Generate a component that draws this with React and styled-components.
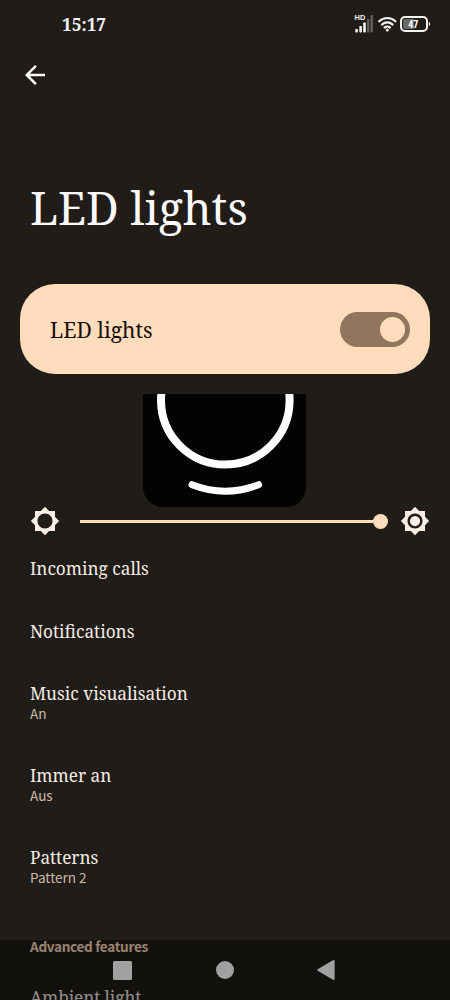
import React from "react";
import styled, { createGlobalStyle } from "styled-components";

const serif = `"Noto Serif", "DejaVu Serif Condensed", "DejaVu Serif", serif`;
const sans = `"Noto Sans CJK SC", "Noto Sans", sans-serif`;

const GlobalStyle = createGlobalStyle`
  * { box-sizing: border-box; }
  body { margin: 0; background: #201d18; }
  svg { display: block; flex: none; }
`;

const Screen = styled.div`
  position: relative;
  display: flex;
  flex-direction: column;
  width: 450px;
  height: 1000px;
  overflow: hidden;
  background: #201d18;
  color: #f6ece4;
  font-family: ${serif};
  font-stretch: condensed;

  > * { flex-shrink: 0; }
`;

const StatusBar = styled.header`
  display: flex;
  align-items: center;
  justify-content: space-between;
  height: 50px;
  padding: 0 18px 0 62px;
`;

const Clock = styled.time`
  font-size: 17.2px;
  font-weight: 700;
  line-height: 24px;
  color: #f4f4f4;
`;

const StatusIcons = styled.div`
  display: flex;
  height: 50px;
`;

const Toolbar = styled.nav`
  display: flex;
  align-items: center;
  height: 50px;
  padding-left: 20px;
`;

const Title = styled.h1`
  margin: 78px 0 0;
  padding-left: 30px;
  font-size: 45px;
  font-weight: 400;
  line-height: 60px;
  white-space: nowrap;
  color: #fdf8fb;
`;

const SwitchCard = styled.section`
  display: flex;
  align-items: center;
  justify-content: space-between;
  height: 90px;
  margin: 46px 20px 0;
  padding: 0 20px 0 30px;
  border-radius: 35px;
  background: #ffdcbc;
  color: #15100b;
`;

const CardLabel = styled.span`
  padding-top: 2px;
  font-size: 21.2px;
  line-height: 30px;
`;

const Switch = styled.div`
  display: flex;
  align-items: center;
  justify-content: flex-end;
  width: 70px;
  height: 35px;
  padding-right: 5px;
  border-radius: 18px;
  background: #8f765c;
`;

const Knob = styled.div`
  width: 25px;
  height: 25px;
  border-radius: 50%;
  background: #ffdcbc;
`;

const Preview = styled.div`
  width: 163px;
  height: 112.5px;
  margin: 20px 0 0 143px;
  overflow: hidden;
  border-radius: 0 0 20px 20px;
  background: #030303;
`;

const Brightness = styled.div`
  display: flex;
  align-items: center;
  height: 30px;
  margin: -0.5px 0 0.5px;
  padding: 0 20px 0 30px;
`;

const Track = styled.div`
  display: flex;
  align-items: center;
  justify-content: flex-end;
  width: 307.5px;
  height: 15px;
  margin: 0 12.5px 0 20px;
`;

const TrackLine = styled.div`
  flex: 1;
  height: 3px;
  background: #ffdcbc;
`;

const Thumb = styled.div`
  width: 15px;
  height: 15px;
  border-radius: 50%;
  background: #ffdcbc;
`;

const List = styled.main`
  display: flex;
  flex-direction: column;
  padding-top: 1.25px;
`;

const Row = styled.div`
  padding: 20.25px 30px;
`;

const RowTitle = styled.div`
  font-size: 17.2px;
  line-height: 22px;
  letter-spacing: ${(p) => p.$track || "normal"};
  white-space: nowrap;
`;

const RowValue = styled.div`
  margin: -1px 0 1px;
  font-family: ${sans};
  font-size: 13.55px;
  line-height: 19.25px;
  color: #cdb9a9;
`;

const SectionLabel = styled.h2`
  margin: 27.75px 30px 31.5px;
  font-family: ${sans};
  font-size: 13.55px;
  font-weight: 700;
  line-height: 20px;
  letter-spacing: -0.3px;
  color: #ffdcbc;
`;

const LastTitle = styled(RowTitle)`
  padding-left: 30px;
`;

const SystemNav = styled.footer`
  position: absolute;
  inset: auto 0 0;
  display: flex;
  align-items: center;
  justify-content: space-between;
  height: 60px;
  padding: 0 114px 0 112px;
  background: rgba(0, 0, 0, 0.4);
`;

const gear =
  "M20 15.31L23.31 12 20 8.69V4h-4.69L12 .69 8.69 4H4v4.69L.69 12 4 15.31V20h4.69L12 23.31 15.31 20H20v-4.69zM12 18c-3.31 0-6-2.69-6-6s2.69-6 6-6 6 2.69 6 6-2.69 6-6 6z";

const Sun = ({ filled }) => (
  <svg width="30" height="30" viewBox="0 0 24 24" fill="#fbeee6">
    <path d={gear} />
    {filled && <circle cx="12" cy="12" r="4.1" />}
  </svg>
);

const items = [
  { title: "Incoming calls" },
  { title: "Notifications" },
  { title: "Music visualisation", value: "An" },
  { title: "Immer an", value: "Aus" },
  { title: "Patterns", value: "Pattern 2" },
];

export default function App() {
  return (
    <>
      <GlobalStyle />
      <Screen>
        <StatusBar>
          <Clock>15:17</Clock>
          <StatusIcons>
            <svg width="78" height="50" viewBox="354 0 78 50">
              <text x="354.6" y="20.2" fontFamily="Liberation Sans" fontWeight="700" fontSize="7.4" fill="#f4f4f4">HD</text>
              <g fill="#f4f4f4">
                <rect x="355.3" y="29" width="2.6" height="3.6" rx=".8" />
                <rect x="359.3" y="26" width="2.6" height="6.6" rx=".8" />
                <rect x="363.2" y="22.5" width="2.6" height="10.1" rx=".8" />
              </g>
              <g fill="#64615d">
                <rect x="367" y="19" width="2.4" height="13.6" rx=".8" />
                <rect x="370.5" y="15" width="2.4" height="17.6" rx=".8" />
              </g>
              <g fill="none" stroke="#f4f4f4" strokeWidth="2.2" strokeLinecap="round">
                <path d="M379.2 21.3a11.6 11.6 0 0 1 16.2 0" />
                <path d="M382 24.6a7.6 7.6 0 0 1 10.6 0" />
                <path d="M384.6 27.6a3.9 3.9 0 0 1 5.4 0" />
              </g>
              <circle cx="387.3" cy="29.9" r="1.5" fill="#f4f4f4" />
              <rect x="401" y="17" width="26" height="14" rx="4" fill="none" stroke="#f4f4f4" strokeWidth="2" />
              <path d="M405 19h9v10h-9a2 2 0 0 1-2-2v-6a2 2 0 0 1 2-2z" fill="#6b6966" />
              <path d="M428.8 21.7q1.3.5 1.3 2.3t-1.3 2.3z" fill="#f4f4f4" />
              <text x="413.2" y="27.6" textAnchor="middle" fontFamily="Roboto" fontWeight="700" fontSize="10" fill="#fff">47</text>
            </svg>
          </StatusIcons>
        </StatusBar>
        <Toolbar>
          <svg width="30" height="30" viewBox="0 0 24 24" fill="#fff">
            <path d="M20 11H7.83l5.59-5.59L12 4l-8 8 8 8 1.41-1.41L7.83 13H20v-2z" />
          </svg>
        </Toolbar>
        <Title>LED lights</Title>
        <SwitchCard>
          <CardLabel>LED lights</CardLabel>
          <Switch>
            <Knob />
          </Switch>
        </SwitchCard>
        <Preview>
          <svg width="164" height="113" viewBox="143 394 164 113" fill="none" stroke="#fff" strokeLinecap="round">
            <circle cx="225.3" cy="400.3" r="64.3" strokeWidth="8" />
            <path d="M192 484.7a92.2 92.2 0 0 0 66.6 0" strokeWidth="7" />
          </svg>
        </Preview>
        <Brightness>
          <Sun />
          <Track>
            <TrackLine />
            <Thumb />
          </Track>
          <Sun filled />
        </Brightness>
        <List>
          {items.map((item) => (
            <Row key={item.title}>
              <RowTitle>{item.title}</RowTitle>
              {item.value && <RowValue>{item.value}</RowValue>}
            </Row>
          ))}
          <SectionLabel>Advanced features</SectionLabel>
          <LastTitle $track="-0.08px">Ambient light</LastTitle>
        </List>
        <SystemNav>
          <svg width="21" height="21" viewBox="0 0 21 21" fill="#a3a0a1">
            <rect x="1" y="1" width="19" height="19" rx="1.5" />
          </svg>
          <svg width="20" height="20" viewBox="0 0 20 20" fill="#a3a0a1">
            <circle cx="10" cy="10" r="9" />
          </svg>
          <svg width="19" height="22" viewBox="0 0 19 22" fill="#a3a0a1">
            <path d="M0.700 10.200L16 1.200Q17.600 .5 17.600 2v18q0 1.500-1.600.8L.7 11.800q-1-.8 0-1.600z" />
          </svg>
        </SystemNav>
      </Screen>
    </>
  );
}
